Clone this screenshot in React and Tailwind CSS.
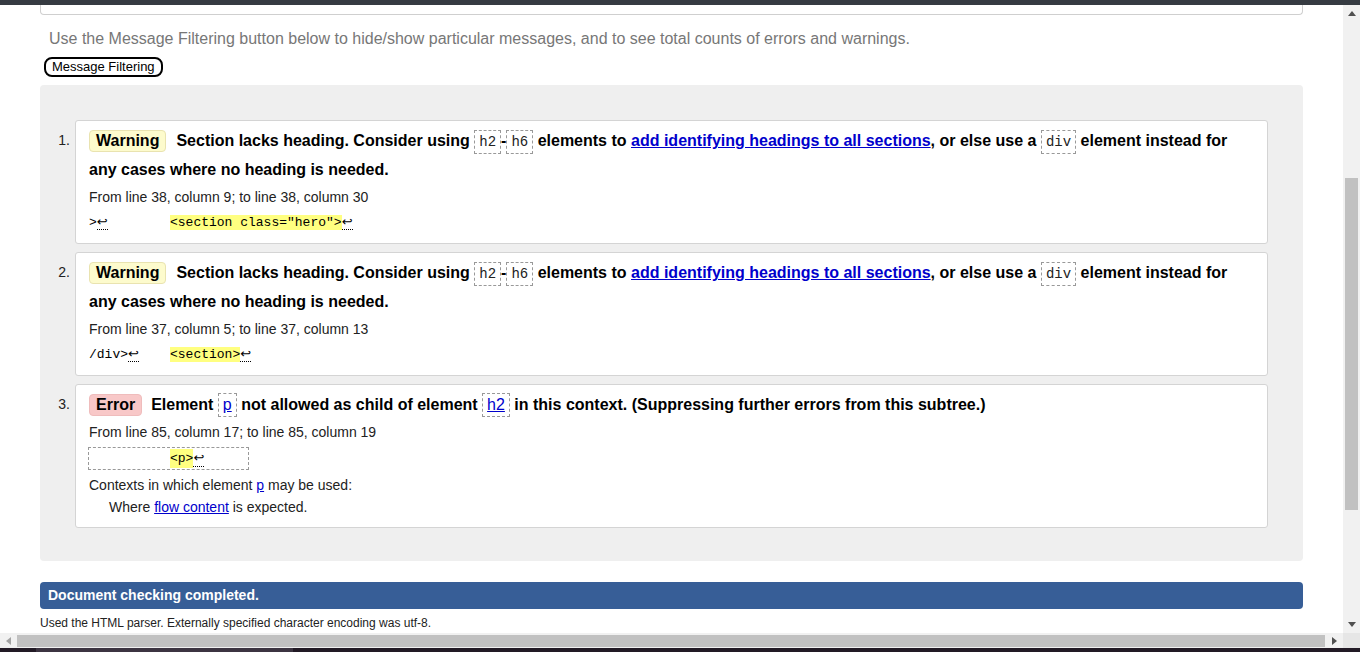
import React from 'react';

const Ret = () => (
  <span className="border-b border-dotted border-black font-['DejaVu_Sans',sans-serif] text-[13px] leading-[16px]">↩</span>
);

const Code = ({ children }) => (
  <span className="inline-block border border-dashed border-[#999] px-[4px] leading-[22px] font-['Liberation_Mono',monospace] text-[14px] font-normal text-[#222]">
    {children}
  </span>
);

const CodeLink = ({ children }) => (
  <span className="inline-block border border-dashed border-[#999] px-[4px] leading-[22px] font-normal">
    <a href="#" className="text-[#0000cc] underline">{children}</a>
  </span>
);

const Badge = ({ kind }) => (
  <span
    className={
      kind === 'Error'
        ? 'inline-block border border-[#efbcbc] bg-[#f8c8c8] rounded-[4px] px-[6px] leading-[20px] mr-[9px]'
        : 'inline-block border border-[#e9e3b0] bg-[#fdfbcd] rounded-[4px] px-[6px] leading-[20px] mr-[10px]'
    }
  >
    {kind}
  </span>
);

const Item = ({ n, children }) => (
  <li className="flex">
    <div className="w-[35px] shrink-0 text-right pr-[5px] pt-[6px] leading-[29px] text-[14px] text-[#222]">{n}.</div>
    <div className="flex-1 bg-white border border-[#d4d4d4] rounded-[3px] pt-[5px] pb-[10px] pl-[13px] pr-[13px]">
      {children}
    </div>
  </li>
);

const SectionMsg = () => (
  <div className="text-[16px] leading-[29px] font-bold text-black">
    <div className="whitespace-nowrap h-[29px]">
      <Badge kind="Warning" />
      Section lacks heading. Consider using <Code>h2</Code>-<Code>h6</Code> elements to{' '}
      <a href="#" className="text-[#0000cc] underline">add identifying headings to all sections</a>, or else use a{' '}
      <Code>div</Code> element instead for
    </div>
    <div className="h-[29px]">any cases where no heading is needed.</div>
  </div>
);

export default function App() {
  return (
    <div className="w-[1360px] h-[652px] overflow-hidden flex flex-col bg-white font-['Liberation_Sans',Arial,sans-serif] text-[#222]">
      <div className="h-[5px] shrink-0 bg-[#363b42]" />

      <div className="flex flex-1 min-h-0">
        <div className="flex-1 min-w-0 overflow-hidden px-[40px]">
          <div className="h-[10px] border border-t-0 border-[#cfcfcf] rounded-b-[4px]" />

          <p className="mt-[14px] pl-[9px] text-[16px] leading-[20px] text-[#777] whitespace-nowrap">
            Use the Message Filtering button below to hide/show particular messages, and to see total counts of errors and warnings.
          </p>

          <div className="mt-[8px] ml-[4px] flex">
            <button className="border-2 border-black rounded-[8px] px-[6px] text-[13px] leading-[16px] bg-white text-black">
              Message Filtering
            </button>
          </div>

          <div className="mt-[8px] bg-[#efefef] rounded-[4px] pt-[35px] pb-[33px] pr-[35px]">
            <ol className="flex flex-col gap-[8px]">
              <Item n={1}>
                <SectionMsg />
                <p className="mt-[3px] h-[20px] text-[14px] leading-[20px]">From line 38, column 9; to line 38, column 30</p>
                <div className="mt-[6px] h-[20px] leading-[20px] font-['Liberation_Mono',monospace] text-[13px] text-black">
                  <span className="inline-block w-[81px]">&gt;<Ret /></span>
                  <span className="bg-[#ffff80]">{'<section class="hero">'}</span>
                  <Ret />
                </div>
              </Item>

              <Item n={2}>
                <SectionMsg />
                <p className="mt-[3px] h-[20px] text-[14px] leading-[20px]">From line 37, column 5; to line 37, column 13</p>
                <div className="mt-[6px] h-[20px] leading-[20px] font-['Liberation_Mono',monospace] text-[13px] text-black">
                  <span className="inline-block w-[81px]">/div&gt;<Ret /></span>
                  <span className="bg-[#ffff80]">{'<section>'}</span>
                  <Ret />
                </div>
              </Item>

              <Item n={3}>
                <div className="h-[29px] text-[16px] leading-[29px] font-bold text-black whitespace-nowrap">
                  <Badge kind="Error" />
                  Element <CodeLink>p</CodeLink> not allowed as child of element <CodeLink>h2</CodeLink> in this context. (Suppressing further errors from this subtree.)
                </div>
                <p className="mt-[3px] h-[20px] text-[14px] leading-[20px]">From line 85, column 17; to line 85, column 19</p>
                <div className="mt-[5px] -ml-[1px] w-[161px] h-[23px] border border-dashed border-[#999] flex items-center pl-[81px] font-['Liberation_Mono',monospace] text-[13px] text-black">
                  <span className="bg-[#ffff80]">{'<p>'}</span>
                  <Ret />
                </div>
                <p className="mt-[5px] h-[20px] text-[14px] leading-[20px]">
                  Contexts in which element <a href="#" className="text-[#0000cc] underline">p</a> may be used:
                </p>
                <p className="mt-[2px] h-[20px] pl-[20px] text-[14px] leading-[20px]">
                  Where <a href="#" className="text-[#0000cc] underline">flow content</a> is expected.
                </p>
              </Item>
            </ol>
          </div>

          <div className="mt-[21px] h-[27px] bg-[#375e97] rounded-[4px] pl-[8px] flex items-center">
            <span className="text-white font-bold text-[14px]">Document checking completed.</span>
          </div>
          <p className="mt-[6px] text-[12px] leading-[16px] text-[#222]">
            Used the HTML parser. Externally specified character encoding was utf-8.
          </p>
        </div>

        {/* vertical scrollbar */}
        <div className="w-[17px] shrink-0 bg-[#f1f1f1] flex flex-col items-center">
          <div className="h-[17px] w-full flex items-center justify-center">
            <svg width="8" height="5" viewBox="0 0 8 5"><polygon points="4,0 8,5 0,5" fill="#505050" /></svg>
          </div>
          <div className="mt-[156px] h-[332px] w-[13px] bg-[#c1c1c1]" />
          <div className="flex-1" />
          <div className="h-[17px] w-full flex items-center justify-center">
            <svg width="8" height="5" viewBox="0 0 8 5"><polygon points="0,0 8,0 4,5" fill="#505050" /></svg>
          </div>
        </div>
      </div>

      {/* horizontal scrollbar */}
      <div className="h-[15px] shrink-0 flex bg-[#f1f1f1]">
        <div className="w-[17px] flex items-center justify-center">
          <svg width="5" height="8" viewBox="0 0 5 8"><polygon points="0,4 5,0 5,8" fill="#a3a3a3" /></svg>
        </div>
        <div className="w-[1308px] mt-[2px] h-[12px] bg-[#c1c1c1]" />
        <div className="w-[18px] flex items-center justify-center">
          <svg width="5" height="8" viewBox="0 0 5 8"><polygon points="0,0 5,4 0,8" fill="#505050" /></svg>
        </div>
        <div className="flex-1 bg-[#e6e6e6]" />
      </div>

      <div className="h-[4px] shrink-0 bg-[#221a25] flex">
        <div className="ml-[36px] w-[257px] bg-[#3c3441]" />
      </div>
    </div>
  );
}
